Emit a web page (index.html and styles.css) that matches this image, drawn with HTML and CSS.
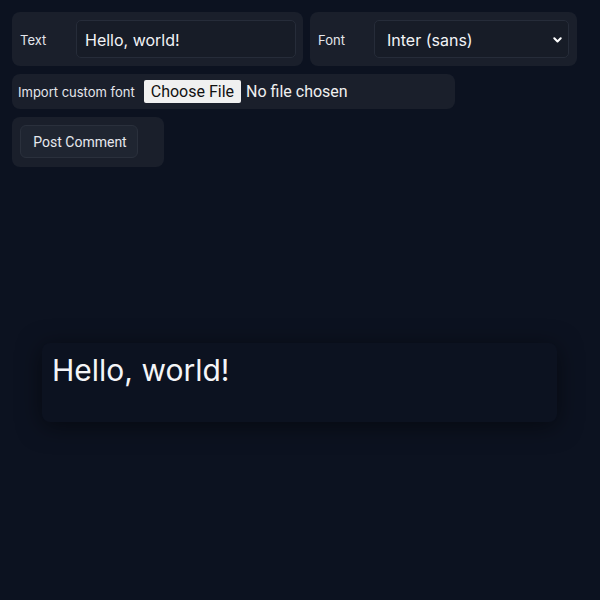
FILE: index.html
```html
<!DOCTYPE html>
<html>
<head>
<meta charset="utf-8">
<link rel="stylesheet" href="styles.css">
</head>
<body>
<div class="controls">
  <div class="row">
    <div class="panel field text-field">
      <label class="label" for="t">Text</label>
      <input id="t" class="input" type="text" value="Hello, world!">
    </div>
    <div class="panel field font-field">
      <label class="label" for="f">Font</label>
      <div class="select">
        <span class="select-value">Inter (sans)</span>
        <svg class="chev" width="9" height="6" viewBox="0 0 9 6"><path d="M1.3 1.3l3.2 3.2 3.2-3.2" fill="none" stroke="#fff" stroke-width="2" stroke-linecap="round" stroke-linejoin="round"/></svg>
      </div>
    </div>
  </div>
  <div class="panel import">
    <span class="import-label">Import custom font</span>
    <span class="file-btn">Choose File</span>
    <span class="file-status">No file chosen</span>
  </div>
  <div class="panel post">
    <button class="btn">Post Comment</button>
  </div>
</div>
<div class="stage">
  <div class="card">Hello, world!</div>
</div>
</body>
</html>
```
FILE: styles.css
```css
html, body {
  margin: 0;
  padding: 0;
  background: #0c1220;
  height: 100%;
}
body {
  font-family: Inter, "Liberation Sans", sans-serif;
  color: #e6e8ee;
}
.controls {
  padding: 12px 12px 0 12px;
  display: flex;
  flex-direction: column;
  align-items: flex-start;
  gap: 8px;
}
.row {
  display: flex;
  gap: 7px;
}
.panel {
  background: #1a1f2b;
  border-radius: 8px;
  box-sizing: border-box;
}
.field {
  display: flex;
  align-items: center;
  padding: 8px;
  height: 54px;
}
.text-field { width: 291px; }
.font-field { width: 267px; }
.label {
  font-size: 13px;
  line-height: 16px;
  padding-top: 2px;
  color: #e4e6ec;
  width: 56px;
  flex: none;
}
.input {
  box-sizing: border-box;
  width: 220px;
  height: 38px;
  background: #171c27;
  border: 1px solid #262c39;
  border-radius: 5px;
  color: #f2f3f6;
  font-family: Inter, sans-serif;
  font-size: 16px;
  padding: 1px 8px 0 8px;
  outline: none;
}
.select {
  box-sizing: border-box;
  width: 195px;
  height: 38px;
  background: #171c27;
  border: 1px solid #262c39;
  border-radius: 5px;
  display: flex;
  align-items: center;
  justify-content: space-between;
  padding: 1px 6px 0 12px;
  font-size: 16px;
  color: #f2f3f6;
}
.chev { display: block; }
.import {
  width: 443px;
  height: 35px;
  display: flex;
  align-items: center;
  padding: 0 6px;
}
.import-label {
  font-size: 13px;
  color: #e4e6ec;
  margin-right: 9px;
}
.file-btn {
  background: #f0f0f0;
  color: #111;
  font-family: Roboto, "Liberation Sans", sans-serif;
  font-size: 16px;
  height: 23px;
  line-height: 23px;
  padding: 0 7px;
  border-radius: 2px;
  margin-right: 5px;
}
.file-status {
  font-family: Roboto, "Liberation Sans", sans-serif;
  font-size: 16px;
  color: #f0f0f0;
}
.post {
  width: 152px;
  height: 50px;
  padding: 8px;
}
.btn {
  width: 118px;
  height: 33px;
  background: #1f2531;
  border: 1px solid #2a303c;
  border-radius: 6px;
  color: #e6e8ee;
  font-family: Roboto, sans-serif;
  font-size: 14px;
  padding: 1px 0 0 2px;
}
.stage {
  padding: 176px 43px 0 42px;
}
.card {
  height: 79px;
  box-sizing: border-box;
  padding: 9px 10px;
  background: #0c1220;
  border-radius: 8px;
  box-shadow: 0 4px 24px rgba(0,0,0,0.5);
  font-family: Inter, sans-serif;
  font-size: 30px;
  line-height: 1.2;
  color: #f4f5f8;
}
```
